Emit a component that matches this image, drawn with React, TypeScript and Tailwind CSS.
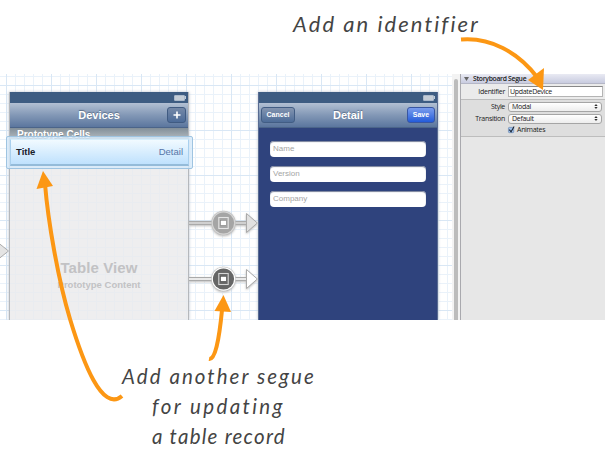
import React from "react";

const GRID =
  "bg-white bg-[linear-gradient(to_right,#d9e7f5_1px,transparent_1px),linear-gradient(to_bottom,#d9e7f5_1px,transparent_1px),linear-gradient(to_right,#eaf2fa_1px,transparent_1px),linear-gradient(to_bottom,#eaf2fa_1px,transparent_1px)] bg-[size:45px_45px,45px_45px,9px_9px,9px_9px] bg-[position:6px_11px,6px_11px,6px_2px,6px_2px]";

function StatusBar() {
  return (
    <div className="flex h-[11px] shrink-0 items-center justify-end bg-[#3d5c82] pr-[2px]">
      <div className="h-[6px] w-[11px] rounded-[1px] border border-[#a9b8ca] bg-[#c3ccd6]" />
      <div className="h-[3px] w-px bg-[#bfcbd9]" />
    </div>
  );
}

function NavBar({ children }: { children: React.ReactNode }) {
  return (
    <div className="grid h-[25px] shrink-0 grid-cols-[44px_1fr_44px] items-center border-b border-[#4b6489] bg-linear-to-b from-[#b2c0d3] via-[#8398b6] to-[#5b769e] text-white">
      {children}
    </div>
  );
}

function Field({ label }: { label: string }) {
  return (
    <div className="flex h-4 items-center rounded-[4px] bg-white pl-[3px] text-[8px] leading-none text-[#a4a4a4] shadow-[inset_0_1px_1px_#77809a]">
      {label}
    </div>
  );
}

function DevicesScene() {
  return (
    <section className="relative mt-[18px] flex w-[180px] shrink-0 flex-col border-x border-[#b5b8bc] bg-[#ededee]/95 shadow-[0_0_3px_#b9c1cc]">
      <StatusBar />
      <NavBar>
        <span />
        <h2 className="text-center text-[11px] font-bold [text-shadow:0_-1px_1px_#5a6d88]">Devices</h2>
        <span className="ml-auto mr-[2px] flex h-4 w-[19px] items-center justify-center rounded-[3px] border border-[#405b82] bg-linear-to-b from-[#7488a7] to-[#4c6b98]">
          <svg className="h-[8px] w-[8px]" viewBox="0 0 8 8">
            <path d="M4 .5v7M.5 4h7" stroke="white" strokeWidth="1.6" />
          </svg>
        </span>
      </NavBar>
      <div className="h-[12px] overflow-hidden bg-linear-to-b from-[#828f99] to-[#b8bec3] pl-[7px] text-[10px] font-bold leading-[13px] text-white [text-shadow:0_1px_1px_#77838c]">
        Prototype Cells
      </div>
      <div className="absolute -left-1 top-[44px] w-[187px] rounded-[2px] border border-[#9fc4e1] bg-[#d6eafa]/80 px-[3px] py-[2px]">
        <div className="flex h-[27px] items-center justify-between border border-t-[#d5edfb] border-x-[#a9d0ee] border-b-2 border-b-[#94bbd9] bg-linear-to-b from-[#f1faff] to-[#bfe1fd] px-[5px] text-[9.5px]">
          <b className="text-[#17202b]">Title</b>
          <span className="text-[#5675a8]">Detail</span>
        </div>
      </div>
      <div className="flex flex-1 flex-col items-center bg-[linear-gradient(to_right,#e9ecf0_1px,transparent_1px),linear-gradient(to_bottom,#e9ecf0_1px,transparent_1px)] bg-[size:9px_9px] bg-[position:5px_8px] pt-[120px] font-bold text-[#c2c2c4]">
        <div className="text-[15px] leading-[16px] tracking-[0.1px]">Table View</div>
        <div className="mt-[4px] text-[9.5px] leading-[10px]">Prototype Content</div>
      </div>
    </section>
  );
}

function DetailScene() {
  return (
    <section className="mt-[18px] flex w-[180px] shrink-0 flex-col border-x border-[#586b91] bg-[#2f437d] shadow-[0_0_3px_#b9c1cc]">
      <StatusBar />
      <NavBar>
        <span className="ml-[2px] flex h-4 w-[34px] items-center justify-center rounded-[3px] border border-[#425d84] bg-linear-to-b from-[#8495b0] to-[#4d6c98] text-[7px] font-bold">Cancel</span>
        <h2 className="text-center text-[11px] font-bold [text-shadow:0_-1px_1px_#5a6d88]">Detail</h2>
        <span className="ml-auto mr-[2px] flex h-4 w-[28px] items-center justify-center rounded-[3px] border border-[#3856a2] bg-linear-to-b from-[#7a9cec] to-[#235bda] text-[7px] font-bold">Save</span>
      </NavBar>
      <div className="flex flex-col gap-[9px] px-[11px] pt-[13px]">
        <Field label="Name" />
        <Field label="Version" />
        <Field label="Company" />
      </div>
    </section>
  );
}

function Segue({ active = false }: { active?: boolean }) {
  return (
    <svg className="block h-[28px] w-[69px] drop-shadow-[0_1px_1px_#bbb]" viewBox="0 0 69 28">
      <path d="M0 14H58" stroke="#aaa" strokeWidth="4" />
      <path d="M0 14H58" stroke={active ? "#fff" : "#ddd"} strokeWidth="1.7" />
      <path d="M57.5 4.5L68.3 14L57.5 23.5Z" fill={active ? "white" : "#e0e0e0"} stroke="#aaa" />
      <circle cx="34.5" cy="14" r="12.2" fill={active ? "#bbb" : "#bcbcbc"} />
      <circle cx="34.5" cy="14" r="11.8" fill={active ? "white" : "#d5d5d5"} />
      <circle cx="34.5" cy="14" r="10.6" fill={active ? "#666" : "#a5a5a5"} />
      <rect x="29.8" y="8.5" width="9.4" height="11" fill="none" stroke={active ? "#d6d6d6" : "#e4e4e4"} strokeWidth="1.1" />
      <rect x="31.6" y="11.3" width="5.8" height="5" fill="white" stroke={active ? "#4d4d4d" : "#888"} strokeWidth=".6" />
    </svg>
  );
}

function Popup({ value }: { value: string }) {
  return (
    <div className="flex h-[10px] w-[94px] items-center justify-between rounded-[3px] border border-[#a5a5a5] bg-linear-to-b from-white to-[#ededed] pl-[3px] pr-[3px]">
      <span>{value}</span>
      <svg className="h-[5px] w-[4px]" viewBox="0 0 4 6">
        <path d="M0 2.3L2 0l2 2.3zM0 3.7L2 6l2-2.3z" fill="#333" />
      </svg>
    </div>
  );
}

function Inspector() {
  return (
    <aside className="w-[145px] shrink-0 border-l border-[#a9a9ae] bg-[#e7e7e7] font-['Open_Sans','Noto_Sans',sans-serif] text-[7px] leading-[10px] tracking-[-0.3px] text-[#202020]">
      <div className="flex h-[10px] items-center gap-[4px] border-b border-[#b5b7c6] bg-linear-to-b from-[#e9eaf3] to-[#c9cce0] pl-[3px] text-[6.8px] font-semibold">
        <svg className="h-[4px] w-[5px]" viewBox="0 0 5 4">
          <path d="M0 0h5L2.5 4z" fill="#666" />
        </svg>
        Storyboard Segue
      </div>
      <div className="flex h-[16px] items-center border-b border-[#bdbdbd] bg-[#ebebeb]">
        <span className="w-[44px] text-right">Identifier</span>
        <span className="ml-[3px] flex h-[11px] w-[95px] items-center border border-[#b4b4b4] border-t-[#888] bg-white pl-px">UpdateDevice</span>
      </div>
      <div className="h-[37px] border-b border-[#bdbdbd] bg-[#dedede] pt-px">
        <div className="flex h-[11px] items-center">
          <span className="mr-[3px] w-[44px] text-right">Style</span>
          <Popup value="Modal" />
        </div>
        <div className="mt-px flex h-[11px] items-center">
          <span className="mr-[3px] w-[44px] text-right">Transition</span>
          <Popup value="Default" />
        </div>
        <div className="flex h-[11px] items-center pl-[47px]">
          <svg className="mr-[2px] h-[8px] w-[7px] overflow-visible" viewBox="0 0 8 8">
            <rect x=".5" y="1" width="6" height="6" rx="1" fill="#9fc3ef" stroke="#7892b7" />
            <path d="M1.5 3.5l2 2.5L7 0" fill="none" stroke="#17202f" strokeWidth="1.2" />
          </svg>
          Animates
        </div>
      </div>
    </aside>
  );
}

export default function App() {
  return (
    <main className="relative flex h-[449px] w-[605px] flex-col overflow-hidden bg-white font-['Liberation_Sans',Arial,sans-serif]">
      <p className="h-[74px] shrink-0 whitespace-nowrap pl-[293px] pt-[9px] font-['Lato',sans-serif] text-[22px] italic leading-[30px] tracking-[2.05px] text-[#444]">
        Add an identifier
      </p>
      <div className="flex h-[246px] shrink-0 overflow-hidden">
        <div className={`flex w-[460px] shrink-0 ${GRID}`}>
          <div className="w-[9px] shrink-0 pt-[167px]">
            <svg className="h-[20px] w-[9px]" viewBox="0 0 9 20">
              <path d="M-4 0L8.5 10L-4 20Z" fill="#e4e4e4" stroke="#aaa" />
            </svg>
          </div>
          <DevicesScene />
          <div className="flex w-[69px] shrink-0 flex-col gap-[28px] pt-[135px]">
            <Segue />
            <Segue active />
          </div>
          <DetailScene />
          <div className="ml-auto w-[8px] bg-[#f3f3f3] pl-[2px] pt-[5px]">
            <div className="h-full w-[4px] rounded-t-full bg-[#bcbcbc]" />
          </div>
        </div>
        <Inspector />
      </div>
      <div className="whitespace-nowrap pt-[41px] font-['Lato',sans-serif] text-[20.5px] italic leading-[30px] text-[#444]">
        <p className="pl-[122px] tracking-[2.05px]">Add another segue</p>
        <p className="pl-[152px] tracking-[2.4px]">for updating</p>
        <p className="pl-[152px] tracking-[1.25px]">a table record</p>
      </div>
      <svg className="pointer-events-none absolute inset-0 h-[449px] w-[605px]" viewBox="0 0 605 449">
        <g fill="none" stroke="#fc9714" strokeWidth="4">
          <path d="M461 39.5C490 37 518 52 537 77" />
          <path d="M45 184C48 221 58 279 70 319C83 362 102 413 122 396" />
          <path d="M222 310C219 341 215 360 209 359" />
        </g>
        <g fill="#fc9714">
          <path d="M543 90L528 80L544 68Z" />
          <path d="M43 171L36.5 189L53 186Z" />
          <path d="M223.5 295L214.5 311L231 312Z" />
        </g>
      </svg>
    </main>
  );
}
